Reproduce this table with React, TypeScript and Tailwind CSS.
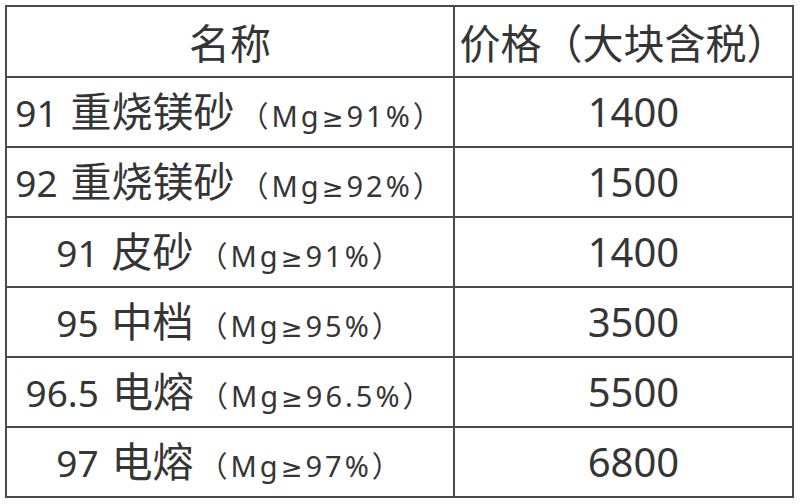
import React from "react";

const rows = [
  { no: "91", name: "重烧镁砂", mg: "91%", price: "1400" },
  { no: "92", name: "重烧镁砂", mg: "92%", price: "1500" },
  { no: "91", name: "皮砂", mg: "91%", price: "1400" },
  { no: "95", name: "中档", mg: "95%", price: "3500" },
  { no: "96.5", name: "电熔", mg: "96.5%", price: "5500" },
  { no: "97", name: "电熔", mg: "97%", price: "6800" },
];

export default function App() {
  return (
    <div
      className="w-[800px] h-[504px] bg-white text-[#353535] pt-[5px] pl-[5px]"
      style={{ fontFamily: '"Noto Sans", "Noto Sans CJK SC", sans-serif' }}
    >
      <table className="border-collapse w-[789px]">
        <thead>
          <tr className="h-[71px]">
            {/* header */}
            <th className="w-[448px] border-2 border-[#4a4a4a] font-normal text-[41px] text-center pt-[4px]">名称</th>
            <th className="border-2 border-[#4a4a4a] font-normal text-[41px] text-center pt-[4px]">价格（大块含税）</th>
          </tr>
        </thead>
        <tbody>
          {rows.map((r, i) => (
            <tr key={i} className="h-[70px]">
              <td className="border-2 border-[#4a4a4a] text-center whitespace-nowrap">
                <span className="text-[37px]">{r.no}</span>
                <span className="text-[41px] ml-[13px]">{r.name}</span>
                <span className="text-[29px] tracking-[3px] ml-[5px]">
                  （Mg<span style={{ fontFamily: '"DejaVu Sans", sans-serif' }} className="text-[26px]">≥</span>{r.mg}）
                </span>
              </td>
              <td className="border-2 border-[#4a4a4a] text-center text-[40px] pl-[20px]">{r.price}</td>
            </tr>
          ))}
        </tbody>
      </table>
    </div>
  );
}
